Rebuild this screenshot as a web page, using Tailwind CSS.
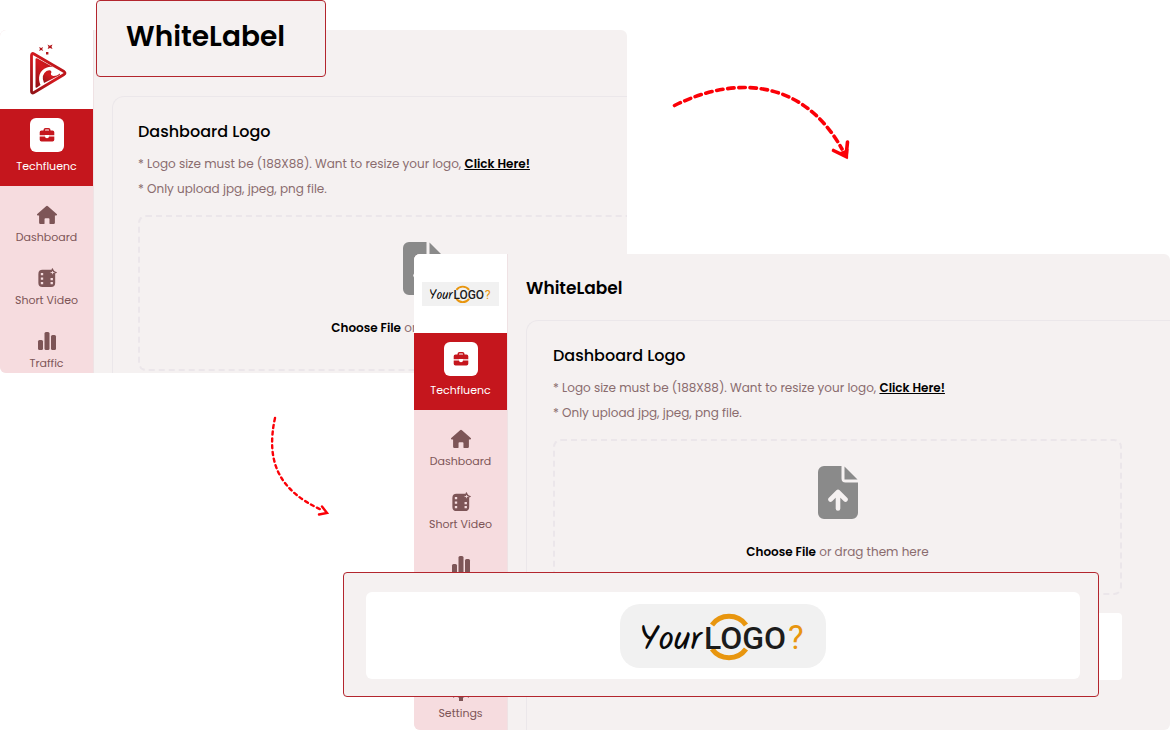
<!DOCTYPE html>
<html lang="en">
<head>
  <meta charset="UTF-8">
  <meta name="viewport" content="width=device-width, initial-scale=1.0">
  <title>WhiteLabel</title>
  <script src="https://cdn.jsdelivr.net/npm/@tailwindcss/browser@4"></script>
</head>
<body class="bg-white font-['Poppins','Inter',sans-serif] text-black">

  <!-- Shared icons -->
  <svg class="hidden" aria-hidden="true">
    <symbol id="icon-briefcase" viewBox="0 0 16 16">
      <path fill="currentColor" fill-rule="evenodd" d="M4.500 3.500V3A2 2 0 0 1 6.500 1h3a2 2 0 0 1 2 2v.5h2A1.800 1.800 0 0 1 15.300 5.300V8.300H10v-.3H6v.3H.7V5.300A1.800 1.800 0 0 1 2.500 3.500zM6 3.500h4V3a.5.5 0 0 0-.5-.5h-3A.5.5 0 0 0 6 3z"/>
      <path fill="currentColor" d="M.7 9.500H6a2 1.700 0 0 0 4 0h5.300v3.200a1.800 1.800 0 0 1-1.800 1.800h-11A1.800 1.800 0 0 1 .7 12.700z"/>
    </symbol>
    <symbol id="icon-home" viewBox="0 0 24 22">
      <path fill="currentColor" d="M11 1.300a1.500 1.500 0 0 1 2 0l9.700 8.600c.7.700.3 1.600-.6 1.600h-1.400v8a1.500 1.500 0 0 1-1.500 1.500h-3.500a1 1 0 0 1-1-1v-4.500a1 1 0 0 0-1-1h-3.400a1 1 0 0 0-1 1V20a1 1 0 0 1-1 1H4.800a1.500 1.500 0 0 1-1.500-1.500v-8H1.900c-.9 0-1.300-.9-.6-1.600z"/>
    </symbol>
    <symbol id="icon-film" viewBox="0 0 22 22">
      <rect x="1.500" y="2" width="18.500" height="19" rx="4.500" fill="currentColor"/>
      <path fill="#f6dcdf" stroke="currentColor" stroke-width="1.200" stroke-linejoin="round" d="M17 .8l1.100 3.100 3.100 1.100-3.100 1.100L17 9.200l-1.100-3.100L12.800 5l3.100-1.100z"/>
      <path fill="#f6dcdf" d="M4.200 5.400h2.600v2.600H4.200zM4.200 10.400h2.600V13H4.200zM4.200 15.400h2.600V18H4.200zM14.900 11h2.600v2.600h-2.600zM14.900 15.400h2.600V18h-2.600z"/>
    </symbol>
    <symbol id="icon-bars" viewBox="0 0 20 20">
      <rect x="1" y="9" width="5" height="10" rx="1.500" fill="currentColor"/>
      <rect x="7.500" y="1" width="5" height="18" rx="1.500" fill="currentColor"/>
      <rect x="14" y="4" width="5" height="15" rx="1.500" fill="currentColor"/>
    </symbol>
    <symbol id="icon-gear" viewBox="0 0 20 20">
      <circle cx="10" cy="10" r="5" fill="none" stroke="currentColor" stroke-width="4"/>
      <path stroke="currentColor" stroke-width="4" d="M10 0v4M10 16v4M1.300 5l3.500 2M15.200 13l3.500 2M1.300 15l3.500-2M15.200 7l3.500-2"/>
    </symbol>
    <symbol id="icon-upload" viewBox="0 0 40 53">
      <path fill="#8a8a8a" d="M6 0H23.500V12.500a4 4 0 0 0 4 4H40V47a6 6 0 0 1-6 6H6a6 6 0 0 1-6-6V6a6 6 0 0 1 6-6z"/>
      <path fill="#8a8a8a" d="M26.500.5L39.500 13.500H26.500z"/>
      <path fill="none" stroke="#f5f1f1" stroke-width="4.600" stroke-linecap="round" stroke-linejoin="round" d="M20 42.500V26M12.500 33.500L20 26l7.500 7.500"/>
    </symbol>
    <symbol id="logo-yours" viewBox="0 0 206 64">
      <g fill="none" stroke="#e8960f" stroke-width="5">
        <path d="M92 21A21 21 0 0 1 126 21"/>
        <path d="M92 45A21 21 0 0 0 126 45"/>
      </g>
      <text x="19" y="46" font-family="Kalam, 'Patrick Hand', Caveat, Lato" font-size="34" fill="#0a0a0a">Your</text>
      <text x="84" y="45" font-family="Roboto" font-weight="500" font-size="32" fill="#1c1c1c">LOGO</text>
      <text x="168" y="45" font-family="Roboto" font-size="33" fill="#e8960f">?</text>
    </symbol>
  </svg>

  <main class="relative min-h-screen overflow-hidden">

    <!-- Before -->
    <section class="absolute left-0 top-[30px] flex h-[343px] w-[627px] overflow-hidden rounded-md bg-[#f5f1f1]">
      <div class="flex w-[756px] shrink-0">
        <aside class="flex w-[94px] shrink-0 flex-col border-r border-[#efe2e4] bg-[#f6dcdf]">
          <a href="#" aria-label="Home" class="flex h-[79px] items-end justify-center bg-white pb-[13px]">
            <svg class="h-[52px] w-10" viewBox="0 0 40 52">
              <defs>
                <linearGradient id="brand-red" x1="0" y1="1" x2="1" y2="0">
                  <stop offset="0" stop-color="#8f1216"/>
                  <stop offset=".5" stop-color="#d4191f"/>
                  <stop offset="1" stop-color="#a31418"/>
                </linearGradient>
              </defs>
              <path fill="none" stroke="url(#brand-red)" stroke-width="2.800" stroke-linejoin="round" d="M4.500 11.500Q4.500 8.500 7 10L37 27.500Q39 29 37 30.500L7 48.500Q4.500 50 4.500 47z"/>
              <path fill="url(#brand-red)" d="M8.500 15.500Q8.500 13.500 10.500 14.500L29.500 25Q25 21.500 20 23.500C12 26.500 10.500 34 13.500 41L10 43.500Q8.500 44.500 8.500 42.500z"/>
              <path fill="url(#brand-red)" d="M17 39Q13.500 31 19.500 27Q24 25 24.500 28Q22.500 31.500 26.500 32Q30 32 33 29.500Q33.500 30.500 32 31.500z"/>
              <path fill="#b3171b" d="M12 3l2.200 1 2-1-1 2 1 2-2-1-2.200 1 1-2zM20.500.5l2.200 1.200L25.500.5l-1 2.300 1 2.300-2.500-1-2.300 1 .8-2.300zM19 8h2.400v2.400H19z"/>
            </svg>
          </a>
          <a href="#" class="flex h-[77px] flex-col items-center bg-[#c5161d] pt-[9px] text-[11px] leading-4 text-white">
            <span class="mb-1.5 flex size-[34px] items-center justify-center rounded-md bg-white text-[#c5161d]">
              <svg class="size-4"><use href="#icon-briefcase"/></svg>
            </span>
            Techfluenc
          </a>
          <nav class="flex flex-col gap-[23px] pt-[19px] text-[11px] leading-4 text-[#7d5557]">
            <a href="#" class="flex flex-col items-center gap-1"><svg class="h-5 w-6"><use href="#icon-home"/></svg>Dashboard</a>
            <a href="#" class="flex flex-col items-center gap-1"><svg class="size-5"><use href="#icon-film"/></svg>Short Video</a>
            <a href="#" class="flex flex-col items-center gap-1"><svg class="size-5"><use href="#icon-bars"/></svg>Traffic</a>
          </nav>
        </aside>
        <div class="flex-1 pl-[18px] pt-[66px]">
          <div class="h-[420px] rounded-tl-xl border-l border-t border-[#ebe7ea] py-[23px] pl-[25px] pr-[49px]">
            <h2 class="text-base font-medium leading-6">Dashboard Logo</h2>
            <p class="mt-[7px] text-[12px] leading-[25px] text-[#8a6c6e]">* Logo size must be (188X88). Want to resize your logo, <a href="#" class="font-semibold text-black underline">Click Here!</a></p>
            <p class="text-[12px] leading-[25px] text-[#8a6c6e]">* Only upload jpg, jpeg, png file.</p>
            <label class="mt-3.5 flex h-[156px] flex-col items-center rounded-lg border-2 border-dashed border-[#ebe6ea] pt-[25px] text-[12px] leading-5 text-[#8a6c6e]">
              <svg class="h-[53px] w-10"><use href="#icon-upload"/></svg>
              <span class="mt-[23px]"><span class="font-semibold text-black">Choose File</span> or drag them here</span>
              <input type="file" accept=".jpg,.jpeg,.png" class="sr-only">
            </label>
          </div>
        </div>
      </div>
    </section>

    <!-- Enlarged title -->
    <div class="absolute left-24 top-0 flex h-[77px] w-[230px] items-center rounded border border-[#b3262e] bg-[#f5f1f1] pb-1 pl-[29px]">
      <h1 class="text-[28px] font-semibold leading-10">WhiteLabel</h1>
    </div>

    <!-- After -->
    <section class="absolute left-[414px] right-0 top-[254px] flex h-[476px] overflow-hidden rounded-md bg-[#f5f1f1]">
      <aside class="flex w-[94px] shrink-0 flex-col border-r border-[#efe2e4] bg-[#f6dcdf]">
        <a href="#" class="flex h-[79px] items-center justify-center bg-white">
          <svg class="h-6 w-[77px] bg-[#f1f1f1]" role="img" aria-label="YourLOGO?"><use href="#logo-yours"/></svg>
        </a>
        <a href="#" class="flex h-[77px] flex-col items-center bg-[#c5161d] pt-[9px] text-[11px] leading-4 text-white">
          <span class="mb-1.5 flex size-[34px] items-center justify-center rounded-md bg-white text-[#c5161d]">
            <svg class="size-4"><use href="#icon-briefcase"/></svg>
          </span>
          Techfluenc
        </a>
        <nav class="flex flex-1 flex-col gap-[23px] pb-[9px] pt-[19px] text-[11px] leading-4 text-[#7d5557]">
          <a href="#" class="flex flex-col items-center gap-1"><svg class="h-5 w-6"><use href="#icon-home"/></svg>Dashboard</a>
          <a href="#" class="flex flex-col items-center gap-1"><svg class="size-5"><use href="#icon-film"/></svg>Short Video</a>
          <a href="#" class="flex flex-col items-center gap-1"><svg class="size-5"><use href="#icon-bars"/></svg>Traffic</a>
          <a href="#" class="mt-auto flex flex-col items-center gap-1"><svg class="size-5"><use href="#icon-gear"/></svg>Settings</a>
        </nav>
      </aside>
      <div class="flex-1 pl-[18px] pt-[22px]">
        <h1 class="text-[17px] font-semibold leading-6">WhiteLabel</h1>
        <div class="mt-5 h-[420px] rounded-tl-xl border-l border-t border-[#ebe7ea] py-[23px] pl-[26px] pr-12">
          <h2 class="text-base font-medium leading-6">Dashboard Logo</h2>
          <p class="mt-[7px] text-[12px] leading-[25px] text-[#8a6c6e]">* Logo size must be (188X88). Want to resize your logo, <a href="#" class="font-semibold text-black underline">Click Here!</a></p>
          <p class="text-[12px] leading-[25px] text-[#8a6c6e]">* Only upload jpg, jpeg, png file.</p>
          <label class="mt-3.5 flex h-[156px] flex-col items-center rounded-lg border-2 border-dashed border-[#ebe6ea] pt-[25px] text-[12px] leading-5 text-[#8a6c6e]">
            <svg class="h-[53px] w-10"><use href="#icon-upload"/></svg>
            <span class="mt-[23px]"><span class="font-semibold text-black">Choose File</span> or drag them here</span>
            <input type="file" accept=".jpg,.jpeg,.png" class="sr-only">
          </label>
          <div class="mt-[18px] h-[67px] rounded bg-white"></div>
        </div>
      </div>
    </section>

    <!-- Enlarged logo preview -->
    <div class="absolute left-[343px] right-[71px] top-[572px] rounded border border-[#b3262e] bg-[#f5f1f1] pb-[17px] pl-[22px] pr-[18px] pt-[19px]">
      <div class="flex h-[87px] items-center justify-center rounded-md bg-white">
        <svg class="h-16 w-[206px] rounded-[20px] bg-[#f1f1f1]" role="img" aria-label="YourLOGO?"><use href="#logo-yours"/></svg>
      </div>
    </div>

    <!-- Arrows -->
    <svg class="absolute left-[660px] top-[70px] h-[100px] w-[210px]" viewBox="0 0 210 100" fill="none" stroke="#fb0007" stroke-width="3.600" stroke-linecap="round" aria-hidden="true">
      <path stroke-dasharray="6.500 4.700" d="M14.500 35.500C78 4 144 11 182 79"/>
      <path d="M173.500 80.500L186 86.500L187.500 72"/>
      <path fill="#fb0007" stroke="none" d="M180 82l8 7 .5-10z"/>
    </svg>
    <svg class="absolute left-[260px] top-[410px] h-[120px] w-[90px]" viewBox="0 0 90 120" fill="none" stroke="#fb0007" stroke-width="2.400" stroke-linecap="round" aria-hidden="true">
      <path stroke-dasharray="3.200 3.600" d="M15 8C5 54 21 82 63 100.500"/>
      <path d="M62 96.500L67 103L59 104.500"/>
    </svg>
  </main>
</body>
</html>
